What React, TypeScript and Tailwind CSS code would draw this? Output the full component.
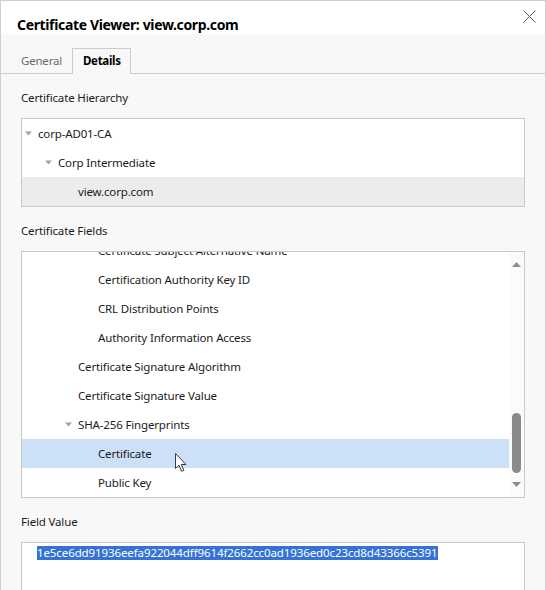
import React from 'react'

type Row = { label: string; level: number; open?: boolean; selected?: boolean; muted?: boolean }

const INDENT = ['pl-[3px]', 'pl-[23px]', 'pl-[43px]', 'pl-[63px]']

const hierarchy: Row[] = [
  { label: 'corp-AD01-CA', level: 0, open: true },
  { label: 'Corp Intermediate', level: 1, open: true },
  { label: 'view.corp.com', level: 2, muted: true },
]

const fields: Row[] = [
  { label: 'Certificate Subject Alternative Name', level: 3 },
  { label: 'Certification Authority Key ID', level: 3 },
  { label: 'CRL Distribution Points', level: 3 },
  { label: 'Authority Information Access', level: 3 },
  { label: 'Certificate Signature Algorithm', level: 2 },
  { label: 'Certificate Signature Value', level: 2 },
  { label: 'SHA-256 Fingerprints', level: 2, open: true },
  { label: 'Certificate', level: 3, selected: true },
  { label: 'Public Key', level: 3 },
]

const Caret = () => (
  <svg width="8" height="5" viewBox="0 0 8 5" className="shrink-0">
    <polygon points="0,0.5 7,0.5 3.5,4.5" fill="#a3a3a3" />
  </svg>
)

const TreeRow = ({ row }: { row: Row }) => (
  <div
    className={`flex items-center h-[29px] ${INDENT[row.level]} ${
      row.selected ? 'bg-[#cce0f8]' : row.muted ? 'bg-[#ececec]' : ''
    }`}
  >
    <span className="w-[13px] shrink-0 flex items-center">{row.open && <Caret />}</span>
    <span className="whitespace-nowrap">{row.label}</span>
  </div>
)

const Label = ({ children }: { children: React.ReactNode }) => (
  <div className="h-[20px] leading-[20px] mb-[10px]">{children}</div>
)

export default function App() {
  return (
    <div className="w-[546px] h-[590px] overflow-hidden bg-[#f8f8f8] border-l border-r border-t border-[#cfcfcf] text-[11.5px] tracking-[-0.15px] text-[#1b1b1b] font-['Noto_Sans',sans-serif] relative">
      {/* Titel */}
      <div className="h-[33px] bg-white flex items-end justify-between pl-[16px] pr-[9px]">
        <h1 className="text-[14px] tracking-[-0.35px] font-bold text-black leading-[20px] mb-[-1px]">
          Certificate Viewer: view.corp.com
        </h1>
        <button className="self-start mt-[9px] text-[#555]" aria-label="Close">
          <svg width="13" height="13" viewBox="0 0 13 13">
            <path d="M0.5 0.5 L12.5 12.5 M12.5 0.5 L0.5 12.5" stroke="#5a5a5a" strokeWidth="1" />
          </svg>
        </button>
      </div>

      {/* Tabs */}
      <div className="h-[40px] flex items-end border-b border-[#cccccc] pl-[20px]">
        <div className="w-[51px] h-[25px] leading-[25px] text-[#6b6b6b] tracking-[-0.2px]">General</div>
        <div className="w-[59px] h-[26px] -mb-px bg-[#f8f8f8] border-t border-l border-r border-[#cccccc] pl-[10px] leading-[24px] font-bold text-black tracking-[-0.3px]">
          Details
        </div>
      </div>

      <div className="pl-[20px] pr-[20px] pt-[14px]">
        <Label>Certificate Hierarchy</Label>
        <div className="h-[89px] bg-white border border-[#c8c8c8]">
          {hierarchy.map((r) => (
            <TreeRow key={r.label} row={r} />
          ))}
        </div>

        <div className="h-[14px]" />
        <Label>Certificate Fields</Label>
        <div className="h-[247px] bg-white border border-[#c8c8c8] flex">
          <div className="flex-1 overflow-hidden">
            <div className="-mt-[16px]">
              {fields.map((r) => (
                <TreeRow key={r.label} row={r} />
              ))}
            </div>
          </div>
          {/* Scrollbar */}
          <div className="w-[15px] bg-[#fbfbfb] flex flex-col items-center">
            <svg width="9" height="5" viewBox="0 0 9 5" className="mt-[10px]">
              <polygon points="4.5,0 9,5 0,5" fill="#8f8f8f" />
            </svg>
            <div className="w-[9px] h-[60px] mt-[146px] rounded-full bg-[#8a8a8a]" />
            <svg width="9" height="5" viewBox="0 0 9 5" className="mt-[9px]">
              <polygon points="0,0 9,0 4.5,5" fill="#8f8f8f" />
            </svg>
          </div>
        </div>

        <div className="h-[14px]" />
        <Label>Field Value</Label>
        <div className="h-[80px] bg-white border border-[#c8c8c8] pl-[15px] pt-[1px]">
          <span className="bg-[#3572d6] text-white leading-[14px] inline-block tracking-[-0.1px]">
            1e5ce6dd91936eefa922044dff9614f2662cc0ad1936ed0c23cd8d43366c5391
          </span>
        </div>
      </div>

      {/* Mauszeiger */}
      <svg width="13" height="20" viewBox="0 0 13 20" className="absolute left-[174px] top-[452px]">
        <path
          d="M0.5 0.5 L0.5 15.5 L4 12.2 L6.6 18.3 L8.8 17.4 L6.3 11.5 L11 11.5 Z"
          fill="white"
          stroke="#3a3a3a"
          strokeWidth="1"
          strokeLinejoin="round"
        />
      </svg>
    </div>
  )
}
